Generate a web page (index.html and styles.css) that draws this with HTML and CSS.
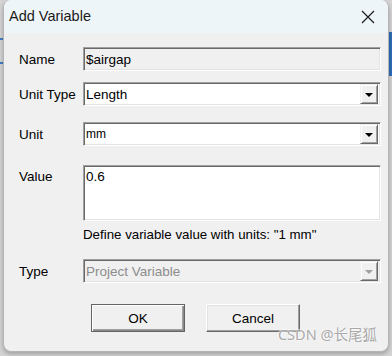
FILE: index.html
```html
<!DOCTYPE html>
<html lang="en">
<head>
    <meta charset="UTF-8">
    <title>Add Variable</title>
    <link rel="stylesheet" href="styles.css">
</head>
<body>

    <div class="dialog">
        <!-- Title bar -->
        <div class="title-bar">
            <span class="title">Add Variable</span>
            <span class="close">
                <svg width="14" height="14" viewBox="0 0 14 14">
                    <path d="M1 1 L13 13 M13 1 L1 13" stroke="#1a1a1a" stroke-width="1.2" fill="none"/>
                </svg>
            </span>
        </div>

        <div class="content">
            <div class="row row-name">
                <label>Name</label>
                <div class="field readonly">$airgap</div>
            </div>
            <div class="row row-unittype">
                <label>Unit Type</label>
                <div class="field combo">
                    <span class="combo-text">Length</span>
                    <span class="drop"><i class="arrow"></i></span>
                </div>
            </div>
            <div class="row row-unit">
                <label>Unit</label>
                <div class="field combo">
                    <span class="combo-text small">mm</span>
                    <span class="drop"><i class="arrow"></i></span>
                </div>
            </div>
            <div class="row row-value">
                <label>Value</label>
                <div class="field textarea">0.6</div>
            </div>
            <p class="hint">Define variable value with units: "1 mm"</p>
            <div class="row row-type">
                <label>Type</label>
                <div class="field combo disabled">
                    <span class="combo-text">Project Variable</span>
                    <span class="drop"><i class="arrow"></i></span>
                </div>
            </div>

            <div class="buttons">
                <button class="btn btn-default">OK</button>
                <button class="btn">Cancel</button>
            </div>
        </div>

        <span class="watermark">CSDN @长尾狐</span>
    </div>

</body>
</html>
```

FILE: styles.css
```css
body {
    margin: 0;
    padding: 0;
    width: 392px;
    height: 356px;
    overflow: hidden;
    background-color: #d4d4d4;
    background-image:
        linear-gradient(to bottom, transparent 38px, #3f7cc4 38px, #3f7cc4 40px, transparent 40px, transparent 62px, #3f7cc4 62px, #3f7cc4 64px, transparent 64px),
        linear-gradient(to bottom, transparent 32px, #2e6db7 32px, #2e6db7 76px, transparent 76px);
    background-size: 3px 100%, 3px 100%;
    background-position: left top, right top;
    background-repeat: no-repeat;
    font-family: "Liberation Sans", Arial, sans-serif;
    color: #000;
}
.dialog {
    position: relative;
    margin: 0 3px;
    width: 384px;
    height: 351px;
    background-color: #f0f0f0;
    border: 1px solid #b4b4b4;
    border-top: none;
    border-radius: 8px;
    box-shadow: 0 2px 4px rgba(0,0,0,0.25);
    overflow: hidden;
}
.title-bar {
    height: 33px;
    display: flex;
    align-items: center;
    justify-content: space-between;
    background-color: #eef5f8;
    padding: 0 13px 0 5px;
}
.title {
    font-size: 14.5px;
    color: #1a1a1a;
    margin-top: -1px;
}
.close {
    display: flex;
    margin-top: 1px;
}
.content {
    padding: 14px 8px 0 15px;
}
.row {
    display: grid;
    grid-template-columns: 64px 298px;
    align-items: center;
}
.row label {
    font-size: 13.5px;
}
.row-unittype { margin-top: 11px; }
.row-unit { margin-top: 16px; }
.row-value {
    margin-top: 19px;
    align-items: start;
}
.row-value label { padding-top: 4px; }
.row-type { margin-top: 17px; }
.field {
    box-sizing: border-box;
    height: 24px;
    background-color: #fff;
    border: 1px solid;
    border-color: #a0a0a0 #fff #fff #a0a0a0;
    box-shadow: inset 1px 1px 0 #696969, inset -1px -1px 0 #e3e3e3;
    padding: 0 2px;
    font-size: 13.5px;
    display: flex;
    align-items: center;
}
.field.readonly {
    background-color: #f0f0f0;
}
.field.textarea {
    height: 56px;
    align-items: flex-start;
    padding-top: 3px;
}
.combo {
    justify-content: space-between;
    padding-right: 2px;
}
.combo-text.small {
    font-size: 12px;
}
.drop {
    box-sizing: border-box;
    width: 18px;
    height: 20px;
    background-color: #f0f0f0;
    border: 1px solid;
    border-color: #f0f0f0 #696969 #696969 #f0f0f0;
    box-shadow: inset 1px 1px 0 #fff, inset -1px -1px 0 #a0a0a0;
    display: flex;
    align-items: center;
    justify-content: center;
}
.arrow {
    width: 0;
    height: 0;
    border-left: 4px solid transparent;
    border-right: 4px solid transparent;
    border-top: 4px solid #000;
    margin-top: 1px;
}
.field.disabled {
    background-color: #f0f0f0;
    color: #8d8d8d;
}
.field.disabled .arrow {
    border-top-color: #a0a0a0;
}
.hint {
    margin: 6px 0 0 64px;
    font-size: 13.3px;
}
.buttons {
    display: flex;
    gap: 21px;
    margin: 21px 0 0 72px;
}
.btn {
    box-sizing: border-box;
    width: 94px;
    height: 28px;
    font-family: "Liberation Sans", Arial, sans-serif;
    font-size: 13.5px;
    background-color: #f0f0f0;
    border: 1px solid;
    border-color: #fff #696969 #696969 #fff;
    box-shadow: inset -1px -1px 0 #a0a0a0, inset 1px 1px 0 #e3e3e3;
    padding: 0;
    color: #000;
}
.btn-default {
    border: 1px solid #646464;
    box-shadow: inset 1px 1px 0 #fff, inset -1px -1px 0 #8a8a8a, inset -2px -2px 0 #a0a0a0;
}
.watermark {
    position: absolute;
    right: 11px;
    bottom: 7px;
    font-family: "Noto Sans", "Noto Sans CJK SC", sans-serif;
    font-size: 14.5px;
    color: #a9a9a9;
    text-shadow: 0 0 2px #fff, 0 0 2px #fff;
}
```
